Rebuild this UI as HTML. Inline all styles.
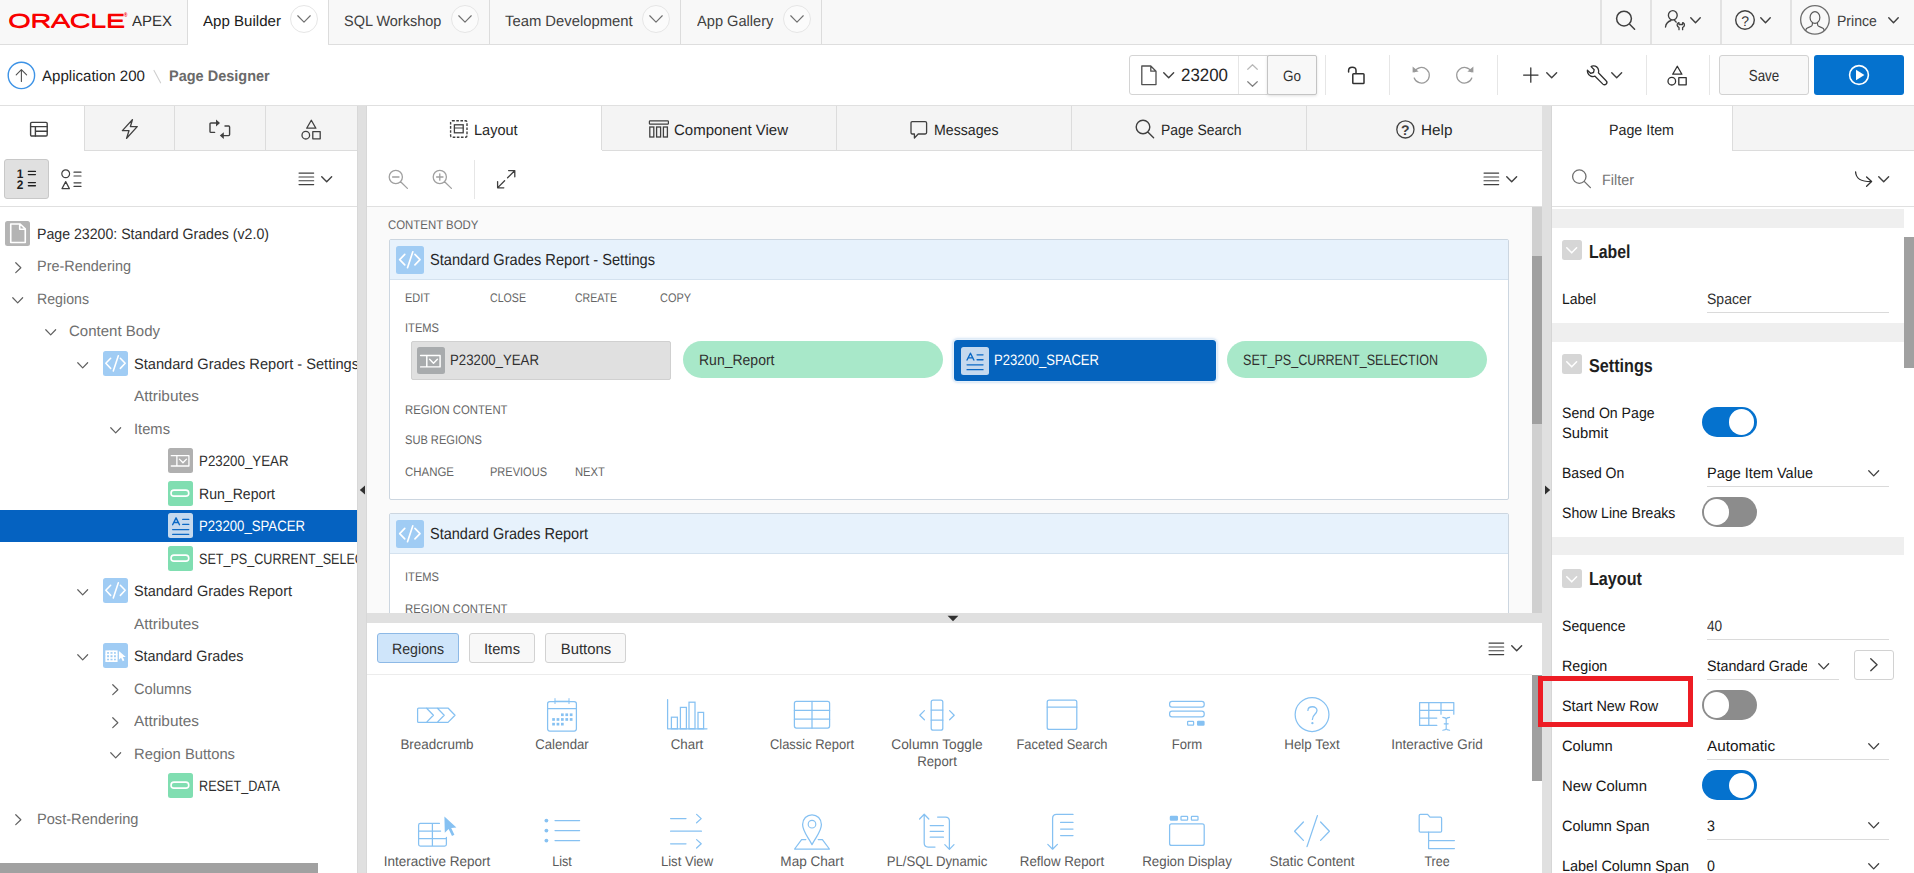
<!DOCTYPE html>
<html lang="en"><head><meta charset="utf-8"><title>Page Designer</title><style>
html,body{margin:0;padding:0;}
body{width:1914px;height:873px;overflow:hidden;background:#fff;font-family:"Liberation Sans",sans-serif;position:relative;}
.a{position:absolute;display:block;}
.t{position:absolute;white-space:nowrap;display:block;text-rendering:geometricPrecision;}
svg{overflow:visible;}
</style></head>
<body>
<div class="a" style="left:0px;top:0px;width:1914px;height:44px;background:#f8f8f8;"></div>
<div class="a" style="left:0px;top:44px;width:1914px;height:1px;background:#dedede;"></div>
<div class="a" style="left:188px;top:0px;width:140px;height:45px;background:#ffffff;"></div>
<div class="a" style="left:328px;top:0px;width:1px;height:44px;background:#dcdcdc;"></div>
<div class="a" style="left:489px;top:0px;width:1px;height:44px;background:#dcdcdc;"></div>
<div class="a" style="left:680px;top:0px;width:1px;height:44px;background:#dcdcdc;"></div>
<div class="a" style="left:821px;top:0px;width:1px;height:44px;background:#dcdcdc;"></div>
<div class="a" style="left:1600px;top:0px;width:2px;height:44px;background:#e2e2e2;"></div>
<div class="a" style="left:1650px;top:0px;width:2px;height:44px;background:#e2e2e2;"></div>
<div class="a" style="left:1720px;top:0px;width:2px;height:44px;background:#e2e2e2;"></div>
<div class="a" style="left:1790px;top:0px;width:2px;height:44px;background:#e2e2e2;"></div><span class="a" style="left:7.8px;top:8px;height:26px;line-height:26px;font-size:19.4px;color:#f80000;letter-spacing:-0.5px;white-space:nowrap;transform-origin:0 50%;transform:scaleX(1.52);text-rendering:geometricPrecision;text-shadow:0 1px 0 #f80000">ORACLE</span><span class="a" style="left:124px;top:13.4px;font-size:4.6px;line-height:6px;color:#f80000;font-weight:700">®</span>
<div class="a" style="left:187px;top:0px;width:1px;height:44px;background:#dcdcdc;"></div>
<span class="t" style="top:11px;line-height:21px;font-size:15px;color:#303030;left:132px;transform-origin:0 50%;transform:scaleX(0.9992);">APEX</span>
<span class="t" style="top:11px;line-height:21px;font-size:15px;color:#1a1a1a;left:202.5px;transform-origin:0 50%;transform:scaleX(1.0056);">App Builder</span>
<span class="t" style="top:11px;line-height:21px;font-size:15px;color:#404040;left:343.9px;transform-origin:0 50%;transform:scaleX(0.9644);">SQL Workshop</span>
<span class="t" style="top:11px;line-height:21px;font-size:15px;color:#404040;left:505.3px;transform-origin:0 50%;transform:scaleX(0.9881);">Team Development</span>
<span class="t" style="top:11px;line-height:21px;font-size:15px;color:#404040;left:696.9px;transform-origin:0 50%;transform:scaleX(0.9748);">App Gallery</span>
<div class="a" style="left:290px;top:5px;width:28px;height:28px;background:#ffffff;border:1px solid #e6e6e6;border-radius:14px;box-sizing:border-box;"></div>
<svg class="a" style="left:297px;top:15.1px;" width="14" height="7.9" viewBox="0 0 14 7.9"><path d="M0.75 0.75 L7.0 7.15 L13.25 0.75" fill="none" stroke="#707070" stroke-width="1.15" stroke-linecap="round" stroke-linejoin="round" /></svg>
<div class="a" style="left:450.8px;top:5px;width:28px;height:28px;background:#fbfbfb;border:1px solid #e6e6e6;border-radius:14px;box-sizing:border-box;"></div>
<svg class="a" style="left:457.8px;top:15.1px;" width="14" height="7.9" viewBox="0 0 14 7.9"><path d="M0.75 0.75 L7.0 7.15 L13.25 0.75" fill="none" stroke="#707070" stroke-width="1.15" stroke-linecap="round" stroke-linejoin="round" /></svg>
<div class="a" style="left:642.4px;top:5px;width:28px;height:28px;background:#fbfbfb;border:1px solid #e6e6e6;border-radius:14px;box-sizing:border-box;"></div>
<svg class="a" style="left:649.4px;top:15.1px;" width="14" height="7.9" viewBox="0 0 14 7.9"><path d="M0.75 0.75 L7.0 7.15 L13.25 0.75" fill="none" stroke="#707070" stroke-width="1.15" stroke-linecap="round" stroke-linejoin="round" /></svg>
<div class="a" style="left:782.9px;top:5px;width:28px;height:28px;background:#fbfbfb;border:1px solid #e6e6e6;border-radius:14px;box-sizing:border-box;"></div>
<svg class="a" style="left:789.9px;top:15.1px;" width="14" height="7.9" viewBox="0 0 14 7.9"><path d="M0.75 0.75 L7.0 7.15 L13.25 0.75" fill="none" stroke="#707070" stroke-width="1.15" stroke-linecap="round" stroke-linejoin="round" /></svg>
<svg class="a" style="left:1612px;top:8px;" width="26" height="26" viewBox="0 0 26 26"><path d="M19.4 10.6 A7.4 7.4 0 1 1 4.6 10.6 A7.4 7.4 0 1 1 19.4 10.6 Z M17.4 16 L22.6 21.2" fill="none" stroke="#404040" stroke-width="1.5" stroke-linecap="round" stroke-linejoin="round" /></svg>
<svg class="a" style="left:1662px;top:8px;" width="28" height="26" viewBox="0 0 28 26"><path d="M15.2 7.3 A4.4 4.7 0 1 1 6.4 7.3 A4.4 4.7 0 1 1 15.2 7.3 Z" fill="none" stroke="#404040" stroke-width="1.35" stroke-linecap="round" stroke-linejoin="round" /><path d="M9 12.5 C5.6 13.6 3.9 15.6 3.5 19" fill="none" stroke="#404040" stroke-width="1.35" stroke-linecap="round" stroke-linejoin="round" /><path d="M12.6 12.5 C13.2 12.9 13.8 13.5 14.2 14.1" fill="none" stroke="#404040" stroke-width="1.35" stroke-linecap="round" stroke-linejoin="round" /><path d="M16.3 14.7 C14.5 15.8 14.8 18.5 17 19.5 L17 21.7 M21.3 14.7 C23.1 15.8 22.8 18.5 20.6 19.5 L20.6 21.7 M17 14.7 L17 16.5 L20.6 16.5 L20.6 14.7" fill="none" stroke="#404040" stroke-width="1.3" stroke-linecap="round" stroke-linejoin="round" /></svg>
<svg class="a" style="left:1690px;top:17px;" width="11" height="6.5" viewBox="0 0 11 6.5"><path d="M0.75 0.75 L5.5 5.75 L10.25 0.75" fill="none" stroke="#404040" stroke-width="1.4" stroke-linecap="round" stroke-linejoin="round" /></svg>
<svg class="a" style="left:1734px;top:9px;" width="22" height="22" viewBox="0 0 22 22"><path d="M20.3 11 A9.3 9.3 0 1 1 1.7 11 A9.3 9.3 0 1 1 20.3 11 Z" fill="none" stroke="#404040" stroke-width="1.4" stroke-linecap="round" stroke-linejoin="round" /></svg>
<span class="t" style="top:11px;line-height:20px;font-size:14px;color:#303030;left:1745.2px;transform-origin:0 50%;transform:scaleX(1.0000) translateX(-50%);">?</span>
<svg class="a" style="left:1760px;top:17px;" width="11" height="6.5" viewBox="0 0 11 6.5"><path d="M0.75 0.75 L5.5 5.75 L10.25 0.75" fill="none" stroke="#404040" stroke-width="1.4" stroke-linecap="round" stroke-linejoin="round" /></svg>
<svg class="a" style="left:1799px;top:4px;" width="32" height="32" viewBox="0 0 32 32"><defs><clipPath id="avc"><circle cx="15.95" cy="15.85" r="14.3"/></clipPath></defs><circle cx="15.95" cy="15.85" r="14.3" fill="none" stroke="#6e6e6e" stroke-width="1.3"/><g clip-path="url(#avc)"><ellipse cx="15.95" cy="13.5" rx="4.9" ry="5.9" fill="none" stroke="#5a5a5a" stroke-width="1.2"/><path d="M13.5 18.8 L13.2 21.2 C13 22.8 8.6 23.2 7.4 24.7 C6.8 25.5 6.6 26.4 6.6 28.4 M18.4 18.8 L18.7 21.2 C18.9 22.8 23.3 23.2 24.5 24.7 C25.1 25.5 25.3 26.4 25.3 28.4" fill="none" stroke="#5a5a5a" stroke-width="1.2" stroke-linecap="round" stroke-linejoin="round" /></g></svg>
<span class="t" style="top:11px;line-height:21px;font-size:15px;color:#404040;left:1836.8px;transform-origin:0 50%;transform:scaleX(0.9358);">Prince</span>
<svg class="a" style="left:1888.4px;top:17px;" width="11.4" height="6.6" viewBox="0 0 11.4 6.6"><path d="M0.75 0.75 L5.5 5.75 L10.25 0.75" fill="none" stroke="#404040" stroke-width="1.4" stroke-linecap="round" stroke-linejoin="round" /></svg>
<div class="a" style="left:0px;top:45px;width:1914px;height:60px;background:#ffffff;"></div>
<div class="a" style="left:0px;top:105px;width:1914px;height:1px;background:#e0e0e0;"></div>
<svg class="a" style="left:7px;top:61px;" width="29" height="29" viewBox="0 0 29 29"><path d="M27.6 14.4 A13.2 13.2 0 1 1 1.2 14.4 A13.2 13.2 0 1 1 27.6 14.4 Z" fill="none" stroke="#3d93e6" stroke-width="1.4" stroke-linecap="round" stroke-linejoin="round" /><path d="M14.4 20.4 L14.4 8.8 M9.2 13.8 L14.4 8.6 L19.6 13.8" fill="none" stroke="#505050" stroke-width="1.1" stroke-linecap="round" stroke-linejoin="round" /></svg>
<span class="t" style="top:66px;line-height:21px;font-size:15.2px;color:#1f1f1f;left:41.7px;transform-origin:0 50%;transform:scaleX(0.9917);">Application 200</span>
<svg class="a" style="left:152px;top:65px;" width="10" height="22" viewBox="0 0 10 22"><path d="M2 5.4 L8.6 17.8" fill="none" stroke="#cfcfcf" stroke-width="1.1" stroke-linecap="round" stroke-linejoin="round" /></svg>
<span class="t" style="top:66px;line-height:21px;font-size:15.2px;color:#6a6a6a;font-weight:700;left:168.7px;transform-origin:0 50%;transform:scaleX(0.9544);">Page Designer</span>
<div class="a" style="left:1129px;top:55px;width:139px;height:40px;background:#fff;border:1px solid #d4d4d4;box-sizing:border-box;border-radius:3px 0 0 3px;"></div>
<div class="a" style="left:1238px;top:56px;width:1px;height:38px;background:#e6e6e6;"></div>
<svg class="a" style="left:1140px;top:64px;" width="18" height="22" viewBox="0 0 18 22"><path d="M1.8 2 L10.8 2 L16 7.2 L16 20.6 L1.8 20.6 Z M10.8 2 L10.8 7.2 L16 7.2" fill="none" stroke="#505050" stroke-width="1.3" stroke-linecap="round" stroke-linejoin="round" /></svg>
<svg class="a" style="left:1163.3px;top:72.2px;" width="11.4" height="6.6" viewBox="0 0 11.4 6.6"><path d="M0.75 0.75 L5.7 5.85 L10.65 0.75" fill="none" stroke="#404040" stroke-width="1.4" stroke-linecap="round" stroke-linejoin="round" /></svg>
<span class="t" style="top:63px;line-height:25px;font-size:18px;color:#262626;left:1180.7px;transform-origin:0 50%;transform:scaleX(0.9368);">23200</span>
<svg class="a" style="left:1247px;top:64px;" width="11" height="6" viewBox="0 0 11 6"><path d="M0.75 5.25 L5.5 0.75 L10.25 5.25" fill="none" stroke="#b8b8b8" stroke-width="1.2" stroke-linecap="round" stroke-linejoin="round" /></svg>
<svg class="a" style="left:1247px;top:80.5px;" width="11" height="6" viewBox="0 0 11 6"><path d="M0.75 0.75 L5.5 5.25 L10.25 0.75" fill="none" stroke="#808080" stroke-width="1.2" stroke-linecap="round" stroke-linejoin="round" /></svg>
<div class="a" style="left:1267px;top:55px;width:50px;height:40px;background:#f8f8f8;border:1px solid #c4c4c4;border-radius:2px;box-sizing:border-box;box-shadow:0 1px 3px rgba(0,0,0,.12);"></div>
<span class="t" style="top:66px;line-height:21px;font-size:15px;color:#303030;left:1292px;transform-origin:0 50%;transform:scaleX(0.8993) translateX(-50%);">Go</span>
<div class="a" style="left:1325px;top:55px;width:1px;height:40px;background:#e6e6e6;"></div>
<div class="a" style="left:1389px;top:55px;width:1px;height:40px;background:#e6e6e6;"></div>
<div class="a" style="left:1497px;top:55px;width:1px;height:40px;background:#e6e6e6;"></div>
<div class="a" style="left:1646px;top:55px;width:1px;height:40px;background:#e6e6e6;"></div>
<div class="a" style="left:1709px;top:55px;width:1px;height:40px;background:#e6e6e6;"></div>
<svg class="a" style="left:1345px;top:64px;" width="22" height="22" viewBox="0 0 22 22"><path d="M8.6 9.8 L18.2 9.8 Q19 9.8 19 10.6 L19 18.8 Q19 19.6 18.2 19.6 L8.6 19.6 Q7.8 19.6 7.8 18.8 L7.8 10.6 Q7.8 9.8 8.6 9.8 Z M11 9.8 L11 6.6 Q11 3.2 7.2 3.2 Q3.6 3.2 3.6 6.6 L3.6 8" fill="none" stroke="#303030" stroke-width="1.5" stroke-linecap="round" stroke-linejoin="round" /></svg>
<svg class="a" style="left:1410px;top:63.2px;" width="22" height="22" viewBox="0 0 22 22"><path d="M4.6 8.6 A7.8 7.8 0 1 1 4.2 15" fill="none" stroke="#9a9a9a" stroke-width="1.25" stroke-linecap="round" stroke-linejoin="round" /><path d="M2.6 3.6 L2.6 9.6 L8.6 8.6 Z" fill="#9a9a9a"/></svg>
<svg class="a" style="left:1454px;top:63.2px;" width="22" height="22" viewBox="0 0 22 22"><path d="M17.4 8.6 A7.8 7.8 0 1 0 17.8 15" fill="none" stroke="#9a9a9a" stroke-width="1.25" stroke-linecap="round" stroke-linejoin="round" /><path d="M19.4 3.6 L19.4 9.6 L13.4 8.6 Z" fill="#9a9a9a"/></svg>
<svg class="a" style="left:1522px;top:66px;" width="18" height="18" viewBox="0 0 18 18"><path d="M8.8 1.8 L8.8 16.2 M1.6 9 L16 9" fill="none" stroke="#303030" stroke-width="1.25" stroke-linecap="round" stroke-linejoin="round" /></svg>
<svg class="a" style="left:1546px;top:72.2px;" width="11.4" height="6.6" viewBox="0 0 11.4 6.6"><path d="M0.75 0.75 L5.7 5.85 L10.65 0.75" fill="none" stroke="#404040" stroke-width="1.4" stroke-linecap="round" stroke-linejoin="round" /></svg>
<svg class="a" style="left:1585px;top:64px;" width="24" height="24" viewBox="0 0 24 24"><path d="M8.2 1.9 C10.6 1.6 13.2 3.3 13.6 6.3 C13.75 7.3 13.65 8.1 13.4 8.8 L21.1 16.7 A2.3 2.3 0 0 1 17.9 20.1 L10 12.2 C7.4 13.2 3.7 12 2.7 8.7 C2.4 7.8 2.3 7 2.4 6.2 L5.6 9.3 L8.5 8.5 L9.2 5.7 L6.1 2.6 C6.8 2.2 7.5 2 8.2 1.9 Z" fill="none" stroke="#303030" stroke-width="1.3" stroke-linecap="round" stroke-linejoin="round" /></svg>
<svg class="a" style="left:1611px;top:72.2px;" width="11.4" height="6.6" viewBox="0 0 11.4 6.6"><path d="M0.75 0.75 L5.7 5.85 L10.65 0.75" fill="none" stroke="#404040" stroke-width="1.4" stroke-linecap="round" stroke-linejoin="round" /></svg>
<svg class="a" style="left:1666px;top:64px;" width="22" height="22" viewBox="0 0 22 22"><path d="M11.3 2.2 L15.9 10.2 L6.7 10.2 Z" fill="none" stroke="#303030" stroke-width="1.3" stroke-linecap="round" stroke-linejoin="round" /><path d="M9.6 17.2 A3.8 3.8 0 1 1 2 17.2 A3.8 3.8 0 1 1 9.6 17.2 Z" fill="none" stroke="#303030" stroke-width="1.3" stroke-linecap="round" stroke-linejoin="round" /><path d="M12.8 13.6 L20.2 13.6 L20.2 20.8 L12.8 20.8 Z" fill="none" stroke="#303030" stroke-width="1.3" stroke-linecap="round" stroke-linejoin="round" /></svg>
<div class="a" style="left:1719px;top:55px;width:90px;height:40px;background:#f8f8f8;border:1px solid #d2d2d2;border-radius:3px;box-sizing:border-box;"></div>
<span class="t" style="top:66px;line-height:22px;font-size:16px;color:#303030;left:1764px;transform-origin:0 50%;transform:scaleX(0.8363) translateX(-50%);">Save</span>
<div class="a" style="left:1814px;top:55px;width:90px;height:40px;background:#0572ce;border-radius:3px;"></div>
<svg class="a" style="left:1848px;top:64px;" width="22" height="22" viewBox="0 0 22 22"><path d="M20.4 11 A9.4 9.4 0 1 1 1.6 11 A9.4 9.4 0 1 1 20.4 11 Z" fill="none" stroke="#fff" stroke-width="1.6" stroke-linecap="round" stroke-linejoin="round" /><path d="M8 5.8 L16.4 11 L8 16.2 Z" fill="#fff"/></svg>
<div class="a" style="left:0;top:0;width:357px;height:873px;overflow:hidden">
<div class="a" style="left:0px;top:106px;width:357px;height:44px;background:#f4f4f4;"></div>
<div class="a" style="left:0px;top:150px;width:357px;height:1px;background:#dcdcdc;"></div>
<div class="a" style="left:0px;top:106px;width:84px;height:45px;background:#fff;"></div>
<div class="a" style="left:84px;top:106px;width:1px;height:44px;background:#dcdcdc;"></div>
<div class="a" style="left:174px;top:106px;width:1px;height:44px;background:#dcdcdc;"></div>
<div class="a" style="left:265px;top:106px;width:1px;height:44px;background:#dcdcdc;"></div>
<svg class="a" style="left:29px;top:120px;" width="20" height="18" viewBox="0 0 20 18"><rect x="1.6" y="2.4" width="16.6" height="13.6" rx="1.2" fill="none" stroke="#404040" stroke-width="1.4"/><path d="M1.6 6.6 L18.2 6.6 M6.4 6.6 L6.4 16 M6.4 11.2 L18.2 11.2" fill="none" stroke="#404040" stroke-width="1.4" stroke-linecap="round" stroke-linejoin="round" /></svg>
<svg class="a" style="left:119px;top:117px;" width="22" height="24" viewBox="0 0 22 24"><path d="M13.4 2.6 L3.4 13.6 L10 13.6 L7.6 21.4 L18.2 9.6 L11.4 9.6 Z" fill="none" stroke="#404040" stroke-width="1.4" stroke-linecap="round" stroke-linejoin="round" /></svg>
<svg class="a" style="left:208px;top:118px;" width="24" height="22" viewBox="0 0 24 22"><path d="M8.6 5 L3 5 Q2 5 2 6 L2 13.4 Q2 14.4 3 14.4 L6.6 14.4" fill="none" stroke="#404040" stroke-width="1.4" stroke-linecap="round" stroke-linejoin="round" /><path d="M8 1.6 L12 5 L8 8.4 Z" fill="#404040"/><path d="M15 17.6 L20.6 17.6 Q21.6 17.6 21.6 16.6 L21.6 9 Q21.6 8 20.6 8 L17 8" fill="none" stroke="#404040" stroke-width="1.4" stroke-linecap="round" stroke-linejoin="round" /><path d="M15.8 14.2 L11.8 17.6 L15.8 21 Z" fill="#404040"/></svg>
<svg class="a" style="left:299.6px;top:117.6px;" width="22" height="22" viewBox="0 0 22 22"><path d="M11.3 2.2 L15.9 10.2 L6.7 10.2 Z" fill="none" stroke="#404040" stroke-width="1.3" stroke-linecap="round" stroke-linejoin="round" /><path d="M9.6 17.2 A3.8 3.8 0 1 1 2 17.2 A3.8 3.8 0 1 1 9.6 17.2 Z" fill="none" stroke="#404040" stroke-width="1.3" stroke-linecap="round" stroke-linejoin="round" /><path d="M12.8 13.6 L20.2 13.6 L20.2 20.8 L12.8 20.8 Z" fill="none" stroke="#404040" stroke-width="1.3" stroke-linecap="round" stroke-linejoin="round" /></svg>
<div class="a" style="left:0px;top:151px;width:357px;height:55px;background:#fff;"></div>
<div class="a" style="left:0px;top:206px;width:357px;height:1px;background:#e0e0e0;"></div>
<div class="a" style="left:4px;top:159px;width:45px;height:40px;background:#e0e0e0;border:1px solid #c8c8c8;border-radius:3px;box-sizing:border-box;"></div>
<span class="t" style="top:165px;line-height:18px;font-size:12.5px;color:#202020;font-weight:700;left:20.2px;transform-origin:0 50%;transform:scaleX(0.9500) translateX(-50%);">1</span>
<span class="t" style="top:176px;line-height:18px;font-size:12.5px;color:#202020;font-weight:700;left:20.2px;transform-origin:0 50%;transform:scaleX(0.9500) translateX(-50%);">2</span>
<svg class="a" style="left:27px;top:167px;" width="10" height="24" viewBox="0 0 10 24"><path d="M1.4 4.4 L8.4 4.4 M1.4 7.6 L8.4 7.6 M1.4 15.6 L8.4 15.6 M1.4 18.8 L8.4 18.8" fill="none" stroke="#202020" stroke-width="1.4" stroke-linecap="round" stroke-linejoin="round" stroke-linecap="butt"/></svg>
<svg class="a" style="left:60px;top:168px;" width="23" height="24" viewBox="0 0 23 24"><path d="M9.6 5.8 A3.9 3.9 0 1 1 1.8 5.8 A3.9 3.9 0 1 1 9.6 5.8 Z" fill="none" stroke="#404040" stroke-width="1.2" stroke-linecap="round" stroke-linejoin="round" /><path d="M5.7 13.6 L9.4 20.6 L2 20.6 Z" fill="none" stroke="#404040" stroke-width="1.2" stroke-linecap="round" stroke-linejoin="round" /><path d="M14 4.2 L21 4.2 M14 8 L21 8 M14 14.8 L21 14.8 M14 18.4 L21 18.4" fill="none" stroke="#404040" stroke-width="1.2" stroke-linecap="round" stroke-linejoin="round" /></svg>
<svg class="a" style="left:299px;top:172px;" width="15" height="14" viewBox="0 0 15 14"><path d="M0 1.1 L14.7 1.1 M0 5 L14.7 5 M0 8.8 L14.7 8.8 M0 12.6 L14.7 12.6" fill="none" stroke="#404040" stroke-width="1.1" stroke-linecap="round" stroke-linejoin="round" stroke-linecap="butt"/></svg>
<svg class="a" style="left:320.7px;top:176px;" width="11.4" height="6.6" viewBox="0 0 11.4 6.6"><path d="M0.75 0.75 L5.7 5.85 L10.65 0.75" fill="none" stroke="#404040" stroke-width="1.4" stroke-linecap="round" stroke-linejoin="round" /></svg>
<div class="a" style="left:0px;top:207px;width:357px;height:666px;background:#fff;"></div>
<div class="a" style="left:5.2px;top:221px;width:25px;height:25px;background:#b4b4b4;border-radius:2.5px;"></div>
<svg class="a" style="left:5.2px;top:221px;" width="25" height="25" viewBox="0 0 25 25"><g transform="translate(0.00 0.00)"><path d="M5.745967741935484 3.024193548387097 L15.120967741935484 3.024193548387097 L20.262096774193548 7.862903225806451 L20.262096774193548 21.471774193548388 L5.745967741935484 21.471774193548388 Z M14.71774193548387 3.024193548387097 L14.71774193548387 8.266129032258064 L20.262096774193548 8.266129032258064" fill="none" stroke="#fff" stroke-width="1.6129032258064517" stroke-linecap="round" stroke-linejoin="round" stroke-linejoin="miter"/></g></svg>
<span class="t" style="top:224px;line-height:21px;font-size:15px;color:#2e2e2e;left:37.1px;transform-origin:0 50%;transform:scaleX(0.9431);">Page 23200: Standard Grades (v2.0)</span>
<svg class="a" style="left:14.65px;top:261.8px;" width="6.6" height="11.4" viewBox="0 0 6.6 11.4"><path d="M0.75 0.75 L5.85 5.7 L0.75 10.65" fill="none" stroke="#606060" stroke-width="1.2" stroke-linecap="round" stroke-linejoin="round" /></svg>
<span class="t" style="top:256px;line-height:21px;font-size:15px;color:#707070;left:37.1px;transform-origin:0 50%;transform:scaleX(0.9635);">Pre-Rendering</span>
<svg class="a" style="left:12.05px;top:296.6px;" width="11.4" height="6.6" viewBox="0 0 11.4 6.6"><path d="M0.75 0.75 L5.7 5.85 L10.65 0.75" fill="none" stroke="#606060" stroke-width="1.2" stroke-linecap="round" stroke-linejoin="round" /></svg>
<span class="t" style="top:289px;line-height:21px;font-size:15px;color:#707070;left:37.1px;transform-origin:0 50%;transform:scaleX(0.9446);">Regions</span>
<svg class="a" style="left:44.55px;top:329.1px;" width="11.4" height="6.6" viewBox="0 0 11.4 6.6"><path d="M0.75 0.75 L5.7 5.85 L10.65 0.75" fill="none" stroke="#606060" stroke-width="1.2" stroke-linecap="round" stroke-linejoin="round" /></svg>
<span class="t" style="top:321px;line-height:21px;font-size:15px;color:#707070;left:69.4px;transform-origin:0 50%;transform:scaleX(1.0010);">Content Body</span>
<svg class="a" style="left:77.05px;top:361.6px;" width="11.4" height="6.6" viewBox="0 0 11.4 6.6"><path d="M0.75 0.75 L5.7 5.85 L10.65 0.75" fill="none" stroke="#606060" stroke-width="1.2" stroke-linecap="round" stroke-linejoin="round" /></svg>
<div class="a" style="left:103px;top:351px;width:25px;height:25px;background:#a0ccf4;border-radius:2.5px;"></div>
<svg class="a" style="left:103px;top:351px;" width="25" height="25" viewBox="0 0 25 25"><g transform="translate(0.00 0.00)"><path d="M7.661290322580645 7.258064516129032 L2.82258064516129 12.298387096774192 L7.661290322580645 17.338709677419352" fill="none" stroke="#fff" stroke-width="1.5625" stroke-linecap="round" stroke-linejoin="round" /><path d="M17.338709677419352 7.258064516129032 L22.177419354838708 12.298387096774192 L17.338709677419352 17.338709677419352" fill="none" stroke="#fff" stroke-width="1.5625" stroke-linecap="round" stroke-linejoin="round" /><path d="M15.32258064516129 4.838709677419355 L10.282258064516128 19.95967741935484" fill="none" stroke="#fff" stroke-width="1.5625" stroke-linecap="round" stroke-linejoin="round" /></g></svg>
<span class="t" style="top:354px;line-height:21px;font-size:15px;color:#2e2e2e;left:134.1px;transform-origin:0 50%;transform:scaleX(0.9743);">Standard Grades Report - Settings</span>
<span class="t" style="top:386px;line-height:21px;font-size:15px;color:#707070;left:134.1px;transform-origin:0 50%;transform:scaleX(1.0256);">Attributes</span>
<svg class="a" style="left:109.55px;top:426.6px;" width="11.4" height="6.6" viewBox="0 0 11.4 6.6"><path d="M0.75 0.75 L5.7 5.85 L10.65 0.75" fill="none" stroke="#606060" stroke-width="1.2" stroke-linecap="round" stroke-linejoin="round" /></svg>
<span class="t" style="top:419px;line-height:21px;font-size:15px;color:#707070;left:134.1px;transform-origin:0 50%;transform:scaleX(0.9813);">Items</span>
<div class="a" style="left:168.2px;top:448px;width:25px;height:25px;background:#b0b0b0;border-radius:2.5px;"></div>
<svg class="a" style="left:168.2px;top:448px;" width="25" height="25" viewBox="0 0 25 25"><g transform="translate(0.00 0.00)"><path d="M3.260869565217391 7.69927536231884 L20.92391304347826 7.69927536231884 L20.92391304347826 18.02536231884058 L3.260869565217391 18.02536231884058 M8.876811594202898 7.69927536231884 L8.876811594202898 18.02536231884058" fill="none" stroke="#fff" stroke-width="1.313405797101449" stroke-linecap="round" stroke-linejoin="round" stroke-linecap="butt" stroke-linejoin="miter"/><path d="M11.413043478260867 11.141304347826086 L14.945652173913041 14.764492753623188 L18.478260869565215 11.141304347826086" fill="none" stroke="#fff" stroke-width="1.313405797101449" stroke-linecap="round" stroke-linejoin="round" /></g></svg>
<span class="t" style="top:451px;line-height:21px;font-size:15px;color:#2e2e2e;left:199.3px;transform-origin:0 50%;transform:scaleX(0.8880);">P23200_YEAR</span>
<div class="a" style="left:168.2px;top:481px;width:25px;height:25px;background:#80deb1;border-radius:2.5px;"></div>
<svg class="a" style="left:168.2px;top:481px;" width="25" height="25" viewBox="0 0 25 25"><g transform="translate(0.00 0.00)"><rect x="3.024193548387097" y="9.173387096774194" width="17.741935483870968" height="5.947580645161291" rx="2.9737903225806455" fill="none" stroke="#fff" stroke-width="1.6129032258064517"/></g></svg>
<span class="t" style="top:484px;line-height:21px;font-size:15px;color:#2e2e2e;left:199.3px;transform-origin:0 50%;transform:scaleX(0.9395);">Run_Report</span>
<div class="a" style="left:0px;top:510px;width:357px;height:32px;background:#0562c1;"></div>
<div class="a" style="left:168.2px;top:513px;width:25px;height:25px;background:#c5d9ee;border-radius:2.5px;"></div>
<svg class="a" style="left:168.2px;top:513px;" width="25" height="25" viewBox="0 0 25 25"><g transform="translate(0.00 0.00)"><path d="M4.637096774193548 11.693548387096774 L8.064516129032258 4.838709677419355 L11.491935483870968 11.693548387096774 M5.846774193548387 9.475806451612904 L10.282258064516128 9.475806451612904" fill="none" stroke="#0b69c5" stroke-width="1.411290322580645" stroke-linecap="round" stroke-linejoin="round" /><path d="M14.71774193548387 6.451612903225807 L20.766129032258064 6.451612903225807 M14.71774193548387 11.391129032258066 L20.766129032258064 11.391129032258066 M4.637096774193548 16.532258064516128 L20.766129032258064 16.532258064516128 M4.637096774193548 21.370967741935484 L20.766129032258064 21.370967741935484" fill="none" stroke="#0b69c5" stroke-width="1.310483870967742" stroke-linecap="round" stroke-linejoin="round" /></g></svg>
<span class="t" style="top:516px;line-height:21px;font-size:15px;color:#fff;left:199.3px;transform-origin:0 50%;transform:scaleX(0.8786);">P23200_SPACER</span>
<div class="a" style="left:168.2px;top:546px;width:25px;height:25px;background:#80deb1;border-radius:2.5px;"></div>
<svg class="a" style="left:168.2px;top:546px;" width="25" height="25" viewBox="0 0 25 25"><g transform="translate(0.00 0.00)"><rect x="3.024193548387097" y="9.173387096774194" width="17.741935483870968" height="5.947580645161291" rx="2.9737903225806455" fill="none" stroke="#fff" stroke-width="1.6129032258064517"/></g></svg>
<span class="t" style="top:549px;line-height:21px;font-size:15px;color:#2e2e2e;left:199.3px;transform-origin:0 50%;transform:scaleX(0.8385);">SET_PS_CURRENT_SELECTION</span>
<svg class="a" style="left:77.05px;top:589.1px;" width="11.4" height="6.6" viewBox="0 0 11.4 6.6"><path d="M0.75 0.75 L5.7 5.85 L10.65 0.75" fill="none" stroke="#606060" stroke-width="1.2" stroke-linecap="round" stroke-linejoin="round" /></svg>
<div class="a" style="left:103px;top:578px;width:25px;height:25px;background:#a0ccf4;border-radius:2.5px;"></div>
<svg class="a" style="left:103px;top:578px;" width="25" height="25" viewBox="0 0 25 25"><g transform="translate(0.00 0.00)"><path d="M7.661290322580645 7.258064516129032 L2.82258064516129 12.298387096774192 L7.661290322580645 17.338709677419352" fill="none" stroke="#fff" stroke-width="1.5625" stroke-linecap="round" stroke-linejoin="round" /><path d="M17.338709677419352 7.258064516129032 L22.177419354838708 12.298387096774192 L17.338709677419352 17.338709677419352" fill="none" stroke="#fff" stroke-width="1.5625" stroke-linecap="round" stroke-linejoin="round" /><path d="M15.32258064516129 4.838709677419355 L10.282258064516128 19.95967741935484" fill="none" stroke="#fff" stroke-width="1.5625" stroke-linecap="round" stroke-linejoin="round" /></g></svg>
<span class="t" style="top:581px;line-height:21px;font-size:15px;color:#2e2e2e;left:134.1px;transform-origin:0 50%;transform:scaleX(0.9667);">Standard Grades Report</span>
<span class="t" style="top:614px;line-height:21px;font-size:15px;color:#707070;left:134.1px;transform-origin:0 50%;transform:scaleX(1.0256);">Attributes</span>
<svg class="a" style="left:77.05px;top:654.1px;" width="11.4" height="6.6" viewBox="0 0 11.4 6.6"><path d="M0.75 0.75 L5.7 5.85 L10.65 0.75" fill="none" stroke="#606060" stroke-width="1.2" stroke-linecap="round" stroke-linejoin="round" /></svg>
<div class="a" style="left:103px;top:643px;width:25px;height:25px;background:#a0ccf4;border-radius:2.5px;"></div>
<svg class="a" style="left:103px;top:643px;" width="25" height="25" viewBox="0 0 25 25"><g transform="translate(0.00 0.00)"><rect x="3.2258064516129035" y="8.266129032258064" width="10.483870967741936" height="9.879032258064516" fill="none" stroke="#fff" stroke-width="1.7137096774193548"/><path d="M3.2258064516129035 11.59274193548387 L13.709677419354838 11.59274193548387 M3.2258064516129035 14.919354838709678 L13.709677419354838 14.919354838709678 M6.754032258064516 8.266129032258064 L6.754032258064516 18.14516129032258 M10.282258064516128 8.266129032258064 L10.282258064516128 18.14516129032258" fill="none" stroke="#fff" stroke-width="1.5120967741935485" stroke-linecap="round" stroke-linejoin="round" /><path d="M15.92741935483871 8.064516129032258 L15.92741935483871 16.733870967741936 L18.044354838709676 14.818548387096774 L19.758064516129032 18.14516129032258 L21.370967741935484 17.338709677419352 L19.758064516129032 14.112903225806452 L22.78225806451613 13.911290322580646 Z" fill="#fff"/></g></svg>
<span class="t" style="top:646px;line-height:21px;font-size:15px;color:#2e2e2e;left:134.1px;transform-origin:0 50%;transform:scaleX(0.9584);">Standard Grades</span>
<svg class="a" style="left:112.15px;top:684.3px;" width="6.6" height="11.4" viewBox="0 0 6.6 11.4"><path d="M0.75 0.75 L5.85 5.7 L0.75 10.65" fill="none" stroke="#606060" stroke-width="1.2" stroke-linecap="round" stroke-linejoin="round" /></svg>
<span class="t" style="top:679px;line-height:21px;font-size:15px;color:#707070;left:134.1px;transform-origin:0 50%;transform:scaleX(0.9732);">Columns</span>
<svg class="a" style="left:112.15px;top:716.8px;" width="6.6" height="11.4" viewBox="0 0 6.6 11.4"><path d="M0.75 0.75 L5.85 5.7 L0.75 10.65" fill="none" stroke="#606060" stroke-width="1.2" stroke-linecap="round" stroke-linejoin="round" /></svg>
<span class="t" style="top:711px;line-height:21px;font-size:15px;color:#707070;left:134.1px;transform-origin:0 50%;transform:scaleX(1.0256);">Attributes</span>
<svg class="a" style="left:109.55px;top:751.6px;" width="11.4" height="6.6" viewBox="0 0 11.4 6.6"><path d="M0.75 0.75 L5.7 5.85 L10.65 0.75" fill="none" stroke="#606060" stroke-width="1.2" stroke-linecap="round" stroke-linejoin="round" /></svg>
<span class="t" style="top:744px;line-height:21px;font-size:15px;color:#707070;left:134.1px;transform-origin:0 50%;transform:scaleX(0.9846);">Region Buttons</span>
<div class="a" style="left:168.2px;top:773px;width:25px;height:25px;background:#80deb1;border-radius:2.5px;"></div>
<svg class="a" style="left:168.2px;top:773px;" width="25" height="25" viewBox="0 0 25 25"><g transform="translate(0.00 0.00)"><rect x="3.024193548387097" y="9.173387096774194" width="17.741935483870968" height="5.947580645161291" rx="2.9737903225806455" fill="none" stroke="#fff" stroke-width="1.6129032258064517"/></g></svg>
<span class="t" style="top:776px;line-height:21px;font-size:15px;color:#2e2e2e;left:199.3px;transform-origin:0 50%;transform:scaleX(0.8425);">RESET_DATA</span>
<svg class="a" style="left:14.65px;top:814.3px;" width="6.6" height="11.4" viewBox="0 0 6.6 11.4"><path d="M0.75 0.75 L5.85 5.7 L0.75 10.65" fill="none" stroke="#606060" stroke-width="1.2" stroke-linecap="round" stroke-linejoin="round" /></svg>
<span class="t" style="top:809px;line-height:21px;font-size:15px;color:#707070;left:37.1px;transform-origin:0 50%;transform:scaleX(0.9738);">Post-Rendering</span>
<div class="a" style="left:0px;top:863px;width:357px;height:10px;background:#ffffff;"></div>
<div class="a" style="left:0px;top:863px;width:317.5px;height:10px;background:#a1a1a1;"></div></div>
<div class="a" style="left:357px;top:106px;width:10px;height:767px;background:#e0e0e0;"></div>
<div class="a" style="left:357px;top:106px;width:1px;height:767px;background:#d8d8d8;"></div>
<div class="a" style="left:366px;top:106px;width:1px;height:767px;background:#d8d8d8;"></div>
<div class="a" style="left:1542px;top:106px;width:10px;height:767px;background:#e0e0e0;"></div>
<div class="a" style="left:1551px;top:106px;width:1px;height:767px;background:#d6d6d6;"></div>
<svg class="a" style="left:359px;top:485px" width="7" height="10" viewBox="0 0 7 10"><path d="M6 0.5 L0.8 5 L6 9.5 Z" fill="#303030"/></svg>
<svg class="a" style="left:1543.5px;top:485px" width="7" height="10" viewBox="0 0 7 10"><path d="M1 0.5 L6.2 5 L1 9.5 Z" fill="#303030"/></svg>
<div class="a" style="left:367px;top:106px;width:1175px;height:44px;background:#f4f4f4;"></div>
<div class="a" style="left:367px;top:150px;width:1175px;height:1px;background:#dcdcdc;"></div>
<div class="a" style="left:367px;top:106px;width:234.5px;height:45px;background:#fff;"></div>
<div class="a" style="left:601px;top:106px;width:1px;height:44px;background:#dcdcdc;"></div>
<div class="a" style="left:836px;top:106px;width:1px;height:44px;background:#dcdcdc;"></div>
<div class="a" style="left:1071px;top:106px;width:1px;height:44px;background:#dcdcdc;"></div>
<div class="a" style="left:1306px;top:106px;width:1px;height:44px;background:#dcdcdc;"></div>
<svg class="a" style="left:449px;top:119px;" width="20" height="20" viewBox="0 0 20 20"><rect x="1.6" y="1.8" width="16.4" height="16.4" rx="1.6" fill="none" stroke="#404040" stroke-width="1.4" stroke-dasharray="2.6 1.5"/><rect x="5.4" y="5.8" width="8.8" height="8" fill="none" stroke="#404040" stroke-width="1.3"/><path d="M5.4 9 L14.2 9" fill="none" stroke="#404040" stroke-width="1.2" stroke-linecap="round" stroke-linejoin="round" /></svg>
<span class="t" style="top:120px;line-height:21px;font-size:15px;color:#262626;left:474px;transform-origin:0 50%;transform:scaleX(0.9679);">Layout</span>
<svg class="a" style="left:648px;top:119px;" width="22" height="20" viewBox="0 0 22 20"><rect x="1.4" y="1.8" width="19" height="3.4" rx="0.8" fill="none" stroke="#404040" stroke-width="1.2"/><rect x="1.8" y="8" width="4" height="10" fill="none" stroke="#404040" stroke-width="1.3"/><rect x="8.6" y="8" width="4" height="10" fill="none" stroke="#404040" stroke-width="1.3"/><rect x="15.4" y="8" width="4" height="10" fill="none" stroke="#404040" stroke-width="1.3"/></svg>
<span class="t" style="top:120px;line-height:21px;font-size:15px;color:#262626;left:674px;transform-origin:0 50%;transform:scaleX(1.0003);">Component View</span>
<svg class="a" style="left:909px;top:119px;" width="20" height="20" viewBox="0 0 20 20"><path d="M3.2 2.6 L16.2 2.6 Q17.6 2.6 17.6 4 L17.6 13.6 Q17.6 15 16.2 15 L9.2 15 L5.4 19 L5.4 15 L3.2 15 Q2 15 2 13.6 L2 4 Q2 2.6 3.2 2.6 Z" fill="none" stroke="#404040" stroke-width="1.3" stroke-linecap="round" stroke-linejoin="round" /></svg>
<span class="t" style="top:120px;line-height:21px;font-size:15px;color:#262626;left:933.5px;transform-origin:0 50%;transform:scaleX(0.9433);">Messages</span>
<svg class="a" style="left:1134px;top:118px;" width="22" height="22" viewBox="0 0 22 22"><path d="M15.8 9 A6.8 6.8 0 1 1 2.2 9 A6.8 6.8 0 1 1 15.8 9 Z M13.8 14 L19.6 19.8" fill="none" stroke="#404040" stroke-width="1.4" stroke-linecap="round" stroke-linejoin="round" /></svg>
<span class="t" style="top:120px;line-height:21px;font-size:15px;color:#262626;left:1160.5px;transform-origin:0 50%;transform:scaleX(0.9281);">Page Search</span>
<svg class="a" style="left:1395px;top:119px;" width="21" height="21" viewBox="0 0 21 21"><path d="M19 10.4 A8.6 8.6 0 1 1 1.8 10.4 A8.6 8.6 0 1 1 19 10.4 Z" fill="none" stroke="#404040" stroke-width="1.3" stroke-linecap="round" stroke-linejoin="round" /></svg>
<span class="t" style="top:120px;line-height:20px;font-size:14px;color:#404040;font-weight:700;left:1405.4px;transform-origin:0 50%;transform:scaleX(1.0000) translateX(-50%);">?</span>
<span class="t" style="top:120px;line-height:21px;font-size:15px;color:#262626;left:1420.5px;transform-origin:0 50%;transform:scaleX(1.0208);">Help</span>
<div class="a" style="left:367px;top:151px;width:1175px;height:55px;background:#fff;"></div>
<div class="a" style="left:367px;top:206px;width:1175px;height:1px;background:#e0e0e0;"></div>
<svg class="a" style="left:388px;top:169px;" width="22" height="22" viewBox="0 0 22 22"><path d="M14.4 8 A6.6 6.6 0 1 1 1.2 8 A6.6 6.6 0 1 1 14.4 8 Z M12.6 12.8 L19.4 19.4 M4.6 8 L11 8" fill="none" stroke="#a0a0a0" stroke-width="1.3" stroke-linecap="round" stroke-linejoin="round" /></svg>
<svg class="a" style="left:432px;top:169px;" width="22" height="22" viewBox="0 0 22 22"><path d="M14.4 8 A6.6 6.6 0 1 1 1.2 8 A6.6 6.6 0 1 1 14.4 8 Z M12.6 12.8 L19.4 19.4 M4.6 8 L11 8 M7.8 4.8 L7.8 11.2" fill="none" stroke="#a0a0a0" stroke-width="1.3" stroke-linecap="round" stroke-linejoin="round" /></svg>
<div class="a" style="left:474px;top:160px;width:1px;height:39px;background:#e6e6e6;"></div>
<svg class="a" style="left:496px;top:169px;" width="21" height="21" viewBox="0 0 21 21"><path d="M11.6 8.8 L18.6 1.8 M12.6 1.6 L18.8 1.6 L18.8 7.8 M8.6 11.8 L1.8 18.6 M1.6 12.6 L1.6 18.8 L7.8 18.8" fill="none" stroke="#404040" stroke-width="1.3" stroke-linecap="round" stroke-linejoin="round" /></svg>
<svg class="a" style="left:1484.2px;top:172.4px;" width="15" height="14" viewBox="0 0 15 14"><path d="M0 1.1 L14.7 1.1 M0 5 L14.7 5 M0 8.8 L14.7 8.8 M0 12.6 L14.7 12.6" fill="none" stroke="#404040" stroke-width="1.1" stroke-linecap="round" stroke-linejoin="round" stroke-linecap="butt"/></svg>
<svg class="a" style="left:1506px;top:176px;" width="11.4" height="6.6" viewBox="0 0 11.4 6.6"><path d="M0.75 0.75 L5.7 5.85 L10.65 0.75" fill="none" stroke="#404040" stroke-width="1.4" stroke-linecap="round" stroke-linejoin="round" /></svg>
<div class="a" style="left:367px;top:207px;width:1165px;height:406px;background:#fafafa;"></div>
<span class="t" style="top:216px;line-height:18px;font-size:12.5px;color:#666666;left:388px;transform-origin:0 50%;transform:scaleX(0.9123);">CONTENT BODY</span>
<div class="a" style="left:389px;top:239px;width:1120px;height:260.5px;background:#fff;border:1px solid #ccd6e0;border-radius:2px;box-sizing:border-box;"></div>
<div class="a" style="left:390px;top:240px;width:1118px;height:39px;background:#e7f2fc;"></div>
<div class="a" style="left:390px;top:279px;width:1118px;height:1px;background:#d4e2ef;"></div>
<div class="a" style="left:396.2px;top:246px;width:27.7px;height:27.7px;background:#a0ccf4;border-radius:2.5px;"></div>
<svg class="a" style="left:396.2px;top:246px;" width="27.7" height="27.7" viewBox="0 0 27.7 27.7"><g transform="translate(0.71 0.71)"><path d="M8.056 7.632000000000001 L2.968 12.932 L8.056 18.232" fill="none" stroke="#fff" stroke-width="1.6430000000000002" stroke-linecap="round" stroke-linejoin="round" /><path d="M18.232 7.632000000000001 L23.32 12.932 L18.232 18.232" fill="none" stroke="#fff" stroke-width="1.6430000000000002" stroke-linecap="round" stroke-linejoin="round" /><path d="M16.112 5.088 L10.812 20.988000000000003" fill="none" stroke="#fff" stroke-width="1.6430000000000002" stroke-linecap="round" stroke-linejoin="round" /></g></svg>
<span class="t" style="top:250px;line-height:22px;font-size:16px;color:#262626;left:430.3px;transform-origin:0 50%;transform:scaleX(0.9133);">Standard Grades Report - Settings</span>
<span class="t" style="top:289px;line-height:18px;font-size:12.5px;color:#666666;left:405.3px;transform-origin:0 50%;transform:scaleX(0.8777);">EDIT</span>
<span class="t" style="top:289px;line-height:18px;font-size:12.5px;color:#666666;left:490.3px;transform-origin:0 50%;transform:scaleX(0.8492);">CLOSE</span>
<span class="t" style="top:289px;line-height:18px;font-size:12.5px;color:#666666;left:575.3px;transform-origin:0 50%;transform:scaleX(0.8437);">CREATE</span>
<span class="t" style="top:289px;line-height:18px;font-size:12.5px;color:#666666;left:660.3px;transform-origin:0 50%;transform:scaleX(0.8748);">COPY</span>
<span class="t" style="top:319px;line-height:18px;font-size:12.5px;color:#666666;left:405.3px;transform-origin:0 50%;transform:scaleX(0.8900);">ITEMS</span>
<div class="a" style="left:411px;top:341px;width:260px;height:39px;background:#e0e0e0;border:1px solid #d0d0d0;border-radius:2px;box-sizing:border-box;"></div>
<div class="a" style="left:417.2px;top:347px;width:27.6px;height:27px;background:#a8abad;border-radius:2.5px;"></div>
<svg class="a" style="left:417.2px;top:347px;" width="27.6" height="27.6" viewBox="0 0 27.6 27.6"><g transform="translate(0.00 0.00)"><path d="M3.6 8.5 L23.1 8.5 L23.1 19.9 L3.6 19.9 M9.8 8.5 L9.8 19.9" fill="none" stroke="#fff" stroke-width="1.45" stroke-linecap="round" stroke-linejoin="round" stroke-linecap="butt" stroke-linejoin="miter"/><path d="M12.6 12.3 L16.5 16.3 L20.4 12.3" fill="none" stroke="#fff" stroke-width="1.45" stroke-linecap="round" stroke-linejoin="round" /></g></svg>
<span class="t" style="top:350px;line-height:21px;font-size:15px;color:#303030;left:450.1px;transform-origin:0 50%;transform:scaleX(0.8820);">P23200_YEAR</span>
<div class="a" style="left:683px;top:341.4px;width:260px;height:36.4px;background:#a8e8c9;border-radius:19px;"></div>
<span class="t" style="top:350px;line-height:21px;font-size:15px;color:#303030;left:699px;transform-origin:0 50%;transform:scaleX(0.9334);">Run_Report</span>
<div class="a" style="left:954px;top:340px;width:262px;height:41px;background:#0563bd;border-radius:3.5px;box-shadow:0 0 0 1px #e6f0fa, 0 0 3px 1px rgba(5,98,193,.35);"></div>
<div class="a" style="left:961.2px;top:347px;width:27.7px;height:27.7px;background:#c5d9ee;border-radius:2.5px;"></div>
<svg class="a" style="left:961.2px;top:347px;" width="27.7" height="27.7" viewBox="0 0 27.7 27.7"><g transform="translate(1.45 1.45)"><path d="M4.6 11.6 L8.0 4.8 L11.4 11.6 M5.8 9.4 L10.2 9.4" fill="none" stroke="#0b69c5" stroke-width="1.4" stroke-linecap="round" stroke-linejoin="round" /><path d="M14.6 6.4 L20.6 6.4 M14.6 11.3 L20.6 11.3 M4.6 16.4 L20.6 16.4 M4.6 21.2 L20.6 21.2" fill="none" stroke="#0b69c5" stroke-width="1.3" stroke-linecap="round" stroke-linejoin="round" /></g></svg>
<span class="t" style="top:350px;line-height:21px;font-size:15px;color:#fff;left:994px;transform-origin:0 50%;transform:scaleX(0.8704);">P23200_SPACER</span>
<div class="a" style="left:1227px;top:341.4px;width:260px;height:36.4px;background:#a8e8c9;border-radius:19px;"></div>
<span class="t" style="top:350px;line-height:21px;font-size:15px;color:#303030;left:1242.7px;transform-origin:0 50%;transform:scaleX(0.8385);">SET_PS_CURRENT_SELECTION</span>
<span class="t" style="top:401px;line-height:18px;font-size:12.5px;color:#666666;left:405.3px;transform-origin:0 50%;transform:scaleX(0.9055);">REGION CONTENT</span>
<span class="t" style="top:431px;line-height:18px;font-size:12.5px;color:#666666;left:405.3px;transform-origin:0 50%;transform:scaleX(0.8868);">SUB REGIONS</span>
<span class="t" style="top:463px;line-height:18px;font-size:12.5px;color:#666666;left:405.3px;transform-origin:0 50%;transform:scaleX(0.9162);">CHANGE</span>
<span class="t" style="top:463px;line-height:18px;font-size:12.5px;color:#666666;left:490.3px;transform-origin:0 50%;transform:scaleX(0.8822);">PREVIOUS</span>
<span class="t" style="top:463px;line-height:18px;font-size:12.5px;color:#666666;left:575.3px;transform-origin:0 50%;transform:scaleX(0.8997);">NEXT</span>
<div class="a" style="left:389px;top:513px;width:1120px;height:120px;background:#fff;border:1px solid #ccd6e0;border-radius:2px;box-sizing:border-box;"></div>
<div class="a" style="left:390px;top:514px;width:1118px;height:39px;background:#e7f2fc;"></div>
<div class="a" style="left:390px;top:553px;width:1118px;height:1px;background:#d4e2ef;"></div>
<div class="a" style="left:396.2px;top:520px;width:27.7px;height:27.7px;background:#a0ccf4;border-radius:2.5px;"></div>
<svg class="a" style="left:396.2px;top:520px;" width="27.7" height="27.7" viewBox="0 0 27.7 27.7"><g transform="translate(0.71 0.71)"><path d="M8.056 7.632000000000001 L2.968 12.932 L8.056 18.232" fill="none" stroke="#fff" stroke-width="1.6430000000000002" stroke-linecap="round" stroke-linejoin="round" /><path d="M18.232 7.632000000000001 L23.32 12.932 L18.232 18.232" fill="none" stroke="#fff" stroke-width="1.6430000000000002" stroke-linecap="round" stroke-linejoin="round" /><path d="M16.112 5.088 L10.812 20.988000000000003" fill="none" stroke="#fff" stroke-width="1.6430000000000002" stroke-linecap="round" stroke-linejoin="round" /></g></svg>
<span class="t" style="top:524px;line-height:22px;font-size:16px;color:#262626;left:430.3px;transform-origin:0 50%;transform:scaleX(0.9063);">Standard Grades Report</span>
<span class="t" style="top:568px;line-height:18px;font-size:12.5px;color:#666666;left:405.3px;transform-origin:0 50%;transform:scaleX(0.8900);">ITEMS</span>
<span class="t" style="top:600px;line-height:18px;font-size:12.5px;color:#666666;left:405.3px;transform-origin:0 50%;transform:scaleX(0.9055);">REGION CONTENT</span>
<div class="a" style="left:1532px;top:207px;width:10px;height:406px;background:#d0d0d0;"></div>
<div class="a" style="left:1532px;top:256px;width:10px;height:168px;background:#a0a0a0;"></div>
<div class="a" style="left:367px;top:613px;width:1175px;height:10px;background:#e0e0e0;"></div>
<svg class="a" style="left:947px;top:614.5px" width="12" height="7" viewBox="0 0 12 7"><path d="M0.6 0.8 L11.4 0.8 L6 6.2 Z" fill="#303030"/></svg>
<div class="a" style="left:367px;top:623px;width:1175px;height:250px;background:#fff;"></div>
<div class="a" style="left:377px;top:633px;width:82px;height:30px;background:#cfe5fa;border:1px solid #8db9e6;border-radius:3px;box-sizing:border-box;"></div>
<span class="t" style="top:639px;line-height:21px;font-size:15px;color:#303030;left:418px;transform-origin:0 50%;transform:scaleX(0.9446) translateX(-50%);">Regions</span>
<div class="a" style="left:469px;top:633px;width:66px;height:30px;background:#f8f8f8;border:1px solid #d2d2d2;border-radius:3px;box-sizing:border-box;"></div>
<span class="t" style="top:639px;line-height:21px;font-size:15px;color:#303030;left:502px;transform-origin:0 50%;transform:scaleX(0.9813) translateX(-50%);">Items</span>
<div class="a" style="left:545px;top:633px;width:81px;height:30px;background:#f8f8f8;border:1px solid #d2d2d2;border-radius:3px;box-sizing:border-box;"></div>
<span class="t" style="top:639px;line-height:21px;font-size:15px;color:#303030;left:585.5px;transform-origin:0 50%;transform:scaleX(0.9926) translateX(-50%);">Buttons</span>
<svg class="a" style="left:1489px;top:642px;" width="15" height="14" viewBox="0 0 15 14"><path d="M0 1.1 L14.7 1.1 M0 5 L14.7 5 M0 8.8 L14.7 8.8 M0 12.6 L14.7 12.6" fill="none" stroke="#404040" stroke-width="1.1" stroke-linecap="round" stroke-linejoin="round" stroke-linecap="butt"/></svg>
<svg class="a" style="left:1511px;top:645px;" width="11.4" height="6.6" viewBox="0 0 11.4 6.6"><path d="M0.75 0.75 L5.7 5.85 L10.65 0.75" fill="none" stroke="#404040" stroke-width="1.4" stroke-linecap="round" stroke-linejoin="round" /></svg>
<div class="a" style="left:367px;top:674px;width:1165px;height:1px;background:#ececec;"></div>
<svg class="a" style="left:414.5px;top:694.8px;" width="44" height="40" viewBox="0 0 44 40"><path d="M3.6 13 L33 13 L40 20.2 L33 27.4 L3.6 27.4 Q2.6 27.4 2.6 26.4 L2.6 14 Q2.6 13 3.6 13 Z M11.4 13 L18.4 20.2 L11.4 27.4 M22.2 13 L29.2 20.2 L22.2 27.4" fill="none" stroke="#86c1f2" stroke-width="1.25" stroke-linecap="round" stroke-linejoin="round" /></svg>
<span class="t" style="top:734px;line-height:20px;font-size:14px;color:#5a5a5a;left:436.5px;transform-origin:0 50%;transform:scaleX(0.9598) translateX(-50%);">Breadcrumb</span>
<svg class="a" style="left:539.5px;top:694.8px;" width="44" height="40" viewBox="0 0 44 40"><rect x="7.6" y="6.6" width="28.8" height="29.4" rx="2.2" fill="none" stroke="#86c1f2" stroke-width="1.25"/><path d="M7.6 13.6 L36.4 13.6" fill="none" stroke="#86c1f2" stroke-width="1.25" stroke-linecap="round" stroke-linejoin="round" /><path d="M15 3.6 L15 8.6 M29 3.6 L29 8.6 M15 6.2 L29 6.2" fill="none" stroke="#86c1f2" stroke-width="1.0" stroke-linecap="round" stroke-linejoin="round" /><rect x="21.0" y="18.4" width="2.7" height="2.7" fill="#86c1f2"/><rect x="25.4" y="18.4" width="2.7" height="2.7" fill="#86c1f2"/><rect x="29.8" y="18.4" width="2.7" height="2.7" fill="#86c1f2"/><rect x="12.2" y="23.099999999999998" width="2.7" height="2.7" fill="#86c1f2"/><rect x="16.6" y="23.099999999999998" width="2.7" height="2.7" fill="#86c1f2"/><rect x="21.0" y="23.099999999999998" width="2.7" height="2.7" fill="#86c1f2"/><rect x="25.4" y="23.099999999999998" width="2.7" height="2.7" fill="#86c1f2"/><rect x="29.8" y="23.099999999999998" width="2.7" height="2.7" fill="#86c1f2"/><rect x="12.2" y="27.799999999999997" width="2.7" height="2.7" fill="#86c1f2"/><rect x="16.6" y="27.799999999999997" width="2.7" height="2.7" fill="#86c1f2"/><rect x="21.0" y="27.799999999999997" width="2.7" height="2.7" fill="#86c1f2"/></svg>
<span class="t" style="top:734px;line-height:20px;font-size:14px;color:#5a5a5a;left:561.5px;transform-origin:0 50%;transform:scaleX(0.9414) translateX(-50%);">Calendar</span>
<svg class="a" style="left:664.5px;top:694.8px;" width="44" height="40" viewBox="0 0 44 40"><path d="M2.6 4.6 L2.6 33.8 L42 33.8" fill="none" stroke="#86c1f2" stroke-width="1.25" stroke-linecap="round" stroke-linejoin="round" /><rect x="6.4" y="22.2" width="6" height="11.6" rx="0" fill="none" stroke="#86c1f2" stroke-width="1.25"/><rect x="15.4" y="12.4" width="6" height="21.4" rx="0" fill="none" stroke="#86c1f2" stroke-width="1.25"/><rect x="24" y="7.2" width="6" height="26.6" rx="0" fill="none" stroke="#86c1f2" stroke-width="1.25"/><rect x="33" y="17.4" width="5.6" height="16.4" rx="0" fill="none" stroke="#86c1f2" stroke-width="1.25"/></svg>
<span class="t" style="top:734px;line-height:20px;font-size:14px;color:#5a5a5a;left:686.5px;transform-origin:0 50%;transform:scaleX(0.9523) translateX(-50%);">Chart</span>
<svg class="a" style="left:789.5px;top:694.8px;" width="44" height="40" viewBox="0 0 44 40"><rect x="4.4" y="6.4" width="35.2" height="26.6" rx="2" fill="none" stroke="#86c1f2" stroke-width="1.25"/><path d="M4.4 15.4 L39.6 15.4 M4.4 24.2 L39.6 24.2 M22 6.4 L22 33" fill="none" stroke="#86c1f2" stroke-width="1.25" stroke-linecap="round" stroke-linejoin="round" /></svg>
<span class="t" style="top:734px;line-height:20px;font-size:14px;color:#5a5a5a;left:811.5px;transform-origin:0 50%;transform:scaleX(0.9250) translateX(-50%);">Classic Report</span>
<svg class="a" style="left:914.5px;top:694.8px;" width="44" height="40" viewBox="0 0 44 40"><rect x="16.2" y="5" width="11.6" height="30.2" rx="2" fill="none" stroke="#86c1f2" stroke-width="1.25"/><path d="M16.2 15 L27.8 15 M16.2 25.2 L27.8 25.2" fill="none" stroke="#86c1f2" stroke-width="1.25" stroke-linecap="round" stroke-linejoin="round" /><path d="M9.4 15.6 L4.8 20.2 L9.4 24.8 M34.6 15.6 L39.2 20.2 L34.6 24.8" fill="none" stroke="#86c1f2" stroke-width="1.25" stroke-linecap="round" stroke-linejoin="round" /></svg>
<span class="t" style="top:734px;line-height:20px;font-size:14px;color:#5a5a5a;left:936.5px;transform-origin:0 50%;transform:scaleX(0.9813) translateX(-50%);">Column Toggle</span>
<span class="t" style="top:751px;line-height:20px;font-size:14px;color:#5a5a5a;left:936.5px;transform-origin:0 50%;transform:scaleX(0.9445) translateX(-50%);">Report</span>
<svg class="a" style="left:1039.5px;top:694.8px;" width="44" height="40" viewBox="0 0 44 40"><rect x="7.2" y="5.2" width="29.6" height="29.2" rx="2" fill="none" stroke="#86c1f2" stroke-width="1.25"/><path d="M7.2 12 L36.8 12" fill="none" stroke="#86c1f2" stroke-width="1.25" stroke-linecap="round" stroke-linejoin="round" /></svg>
<span class="t" style="top:734px;line-height:20px;font-size:14px;color:#5a5a5a;left:1061.5px;transform-origin:0 50%;transform:scaleX(0.9206) translateX(-50%);">Faceted Search</span>
<svg class="a" style="left:1164.5px;top:694.8px;" width="44" height="40" viewBox="0 0 44 40"><rect x="4.6" y="6.4" width="34.6" height="5.8" rx="2.4" fill="none" stroke="#86c1f2" stroke-width="1.25"/><rect x="4.6" y="16" width="34.6" height="5.8" rx="2.4" fill="none" stroke="#86c1f2" stroke-width="1.25"/><rect x="22.6" y="26.4" width="6" height="3.6" rx="0.6" fill="none" stroke="#86c1f2" stroke-width="1.25"/><rect x="32.6" y="26.4" width="6.4" height="3.6" rx="0.6" fill="#86c1f2" stroke="#86c1f2" stroke-width="1.25"/></svg>
<span class="t" style="top:734px;line-height:20px;font-size:14px;color:#5a5a5a;left:1186.5px;transform-origin:0 50%;transform:scaleX(0.9366) translateX(-50%);">Form</span>
<svg class="a" style="left:1289.5px;top:694.8px;" width="44" height="40" viewBox="0 0 44 40"><circle cx="22.05" cy="19.6" r="16.9" fill="none" stroke="#86c1f2" stroke-width="1.25"/><path d="M17.9 15.4 C18 10.6 27.2 10.4 27 15.6 C26.8 19.4 22.4 19.4 22.4 24.4" fill="none" stroke="#86c1f2" stroke-width="1.3" stroke-linecap="round" stroke-linejoin="round" /><circle cx="22.4" cy="28.2" r="1.15" fill="#86c1f2"/></svg>
<span class="t" style="top:734px;line-height:20px;font-size:14px;color:#5a5a5a;left:1311.5px;transform-origin:0 50%;transform:scaleX(0.9534) translateX(-50%);">Help Text</span>
<svg class="a" style="left:1414.5px;top:694.8px;" width="44" height="40" viewBox="0 0 44 40"><path d="M4.6 7.6 L38.8 7.6 L38.8 19.2 M4.6 7.6 L4.6 30.4 L21.8 30.4 M4.6 15.4 L38.8 15.4 M4.6 23 L21.8 23 M13.8 7.6 L13.8 30.4 M26 7.6 L26 19.2" fill="none" stroke="#86c1f2" stroke-width="1.25" stroke-linecap="round" stroke-linejoin="round" /><path d="M27.8 22.4 Q30.8 22.6 31.2 24 Q31.6 22.6 34.6 22.4 M27.8 35.2 Q30.8 35 31.2 33.6 Q31.6 35 34.6 35.2 M31.2 24 L31.2 33.6 M29.2 28.8 L33.2 28.8" fill="none" stroke="#86c1f2" stroke-width="1.15" stroke-linecap="round" stroke-linejoin="round" /></svg>
<span class="t" style="top:734px;line-height:20px;font-size:14px;color:#5a5a5a;left:1436.5px;transform-origin:0 50%;transform:scaleX(0.9638) translateX(-50%);">Interactive Grid</span>
<svg class="a" style="left:414.5px;top:811.2px;" width="44" height="40" viewBox="0 0 44 40"><path d="M24.4 12.4 L5.4 12.4 Q3.6 12.4 3.6 14.2 L3.6 33.2 Q3.6 35 5.4 35 L29.6 35 Q31.4 35 31.4 33.2 L31.4 26.4 M3.6 20 L25.6 20 M3.6 27.6 L31.4 27.6 M17.4 12.4 L17.4 35" fill="none" stroke="#86c1f2" stroke-width="1.25" stroke-linecap="round" stroke-linejoin="round" /><path d="M29.4 5.6 L29.8 21.8 L33.6 18 L37 25 L39.4 23.8 L36.2 17 L41.4 16.6 Z" fill="#86c1f2"/></svg>
<span class="t" style="top:851px;line-height:20px;font-size:14px;color:#5a5a5a;left:436.5px;transform-origin:0 50%;transform:scaleX(0.9647) translateX(-50%);">Interactive Report</span>
<svg class="a" style="left:539.5px;top:811.2px;" width="44" height="40" viewBox="0 0 44 40"><circle cx="6.4" cy="9.6" r="1.9" fill="#86c1f2"/><path d="M15 9.6 L39.6 9.6" fill="none" stroke="#86c1f2" stroke-width="1.25" stroke-linecap="round" stroke-linejoin="round" /><circle cx="6.4" cy="19.6" r="1.9" fill="#86c1f2"/><path d="M15 19.6 L39.6 19.6" fill="none" stroke="#86c1f2" stroke-width="1.25" stroke-linecap="round" stroke-linejoin="round" /><circle cx="6.4" cy="29.6" r="1.9" fill="#86c1f2"/><path d="M15 29.6 L39.6 29.6" fill="none" stroke="#86c1f2" stroke-width="1.25" stroke-linecap="round" stroke-linejoin="round" /></svg>
<span class="t" style="top:851px;line-height:20px;font-size:14px;color:#5a5a5a;left:561.5px;transform-origin:0 50%;transform:scaleX(0.8992) translateX(-50%);">List</span>
<svg class="a" style="left:664.5px;top:811.2px;" width="44" height="40" viewBox="0 0 44 40"><path d="M5.6 7.6 L21 7.6 M5.6 20.2 L36.4 20.2 M5.6 32.8 L21 32.8" fill="none" stroke="#86c1f2" stroke-width="1.25" stroke-linecap="round" stroke-linejoin="round" /><path d="M31.6 3.4 L36.2 7.6 L31.6 11.8 M31.6 28.6 L36.2 32.8 L31.6 37" fill="none" stroke="#86c1f2" stroke-width="1.25" stroke-linecap="round" stroke-linejoin="round" /></svg>
<span class="t" style="top:851px;line-height:20px;font-size:14px;color:#5a5a5a;left:686.5px;transform-origin:0 50%;transform:scaleX(0.9358) translateX(-50%);">List View</span>
<svg class="a" style="left:789.5px;top:811.2px;" width="44" height="40" viewBox="0 0 44 40"><path d="M22 33.6 C18 26 12.6 20.4 12.6 13.6 C12.6 7.8 16.8 3.8 22 3.8 C27.2 3.8 31.4 7.8 31.4 13.6 C31.4 20.4 26 26 22 33.6 Z" fill="none" stroke="#86c1f2" stroke-width="1.25" stroke-linecap="round" stroke-linejoin="round" /><circle cx="22" cy="13.2" r="3.8" fill="none" stroke="#86c1f2" stroke-width="1.15"/><path d="M15.8 28.6 L11.6 28.6 L4.6 38 L39.4 38 L32.4 28.6 L28.2 28.6" fill="none" stroke="#86c1f2" stroke-width="1.25" stroke-linecap="round" stroke-linejoin="round" /></svg>
<span class="t" style="top:851px;line-height:20px;font-size:14px;color:#5a5a5a;left:811.5px;transform-origin:0 50%;transform:scaleX(0.9685) translateX(-50%);">Map Chart</span>
<svg class="a" style="left:914.5px;top:811.2px;" width="44" height="40" viewBox="0 0 44 40"><path d="M9.2 3.4 L9.2 32 Q9.2 36 13.2 36 L20 36 M4.6 8 L9.2 3.2 L13.8 8" fill="none" stroke="#86c1f2" stroke-width="1.25" stroke-linecap="round" stroke-linejoin="round" /><path d="M34.4 38.2 L34.4 10 Q34.4 6 30.4 6 L22.6 6 M29.8 33.6 L34.4 38.4 L39 33.6" fill="none" stroke="#86c1f2" stroke-width="1.25" stroke-linecap="round" stroke-linejoin="round" /><path d="M15.2 14.6 L28.4 14.6 M15.2 20.4 L28.4 20.4 M15.2 26.2 L28.4 26.2" fill="none" stroke="#86c1f2" stroke-width="1.25" stroke-linecap="round" stroke-linejoin="round" /></svg>
<span class="t" style="top:851px;line-height:20px;font-size:14px;color:#5a5a5a;left:936.5px;transform-origin:0 50%;transform:scaleX(0.9405) translateX(-50%);">PL/SQL Dynamic</span>
<svg class="a" style="left:1039.5px;top:811.2px;" width="44" height="40" viewBox="0 0 44 40"><path d="M33 3.4 L16.6 3.4 Q12.6 3.4 12.6 7.4 L12.6 38 M7.8 33.4 L12.6 38.2 L17.4 33.4" fill="none" stroke="#86c1f2" stroke-width="1.25" stroke-linecap="round" stroke-linejoin="round" /><path d="M20.6 11.4 L33 11.4 M20.6 18 L33 18 M20.6 24.6 L33 24.6" fill="none" stroke="#86c1f2" stroke-width="1.25" stroke-linecap="round" stroke-linejoin="round" /></svg>
<span class="t" style="top:851px;line-height:20px;font-size:14px;color:#5a5a5a;left:1061.5px;transform-origin:0 50%;transform:scaleX(0.9504) translateX(-50%);">Reflow Report</span>
<svg class="a" style="left:1164.5px;top:811.2px;" width="44" height="40" viewBox="0 0 44 40"><rect x="4.6" y="12.8" width="34.6" height="21.6" rx="2" fill="none" stroke="#86c1f2" stroke-width="1.25"/><rect x="5.4" y="5.4" width="7" height="3.6" rx="0.6" fill="#86c1f2" stroke="#86c1f2" stroke-width="1.25"/><rect x="16" y="5.4" width="6.6" height="3.6" rx="0.6" fill="none" stroke="#86c1f2" stroke-width="1.25"/><rect x="26.4" y="5.4" width="6.6" height="3.6" rx="0.6" fill="none" stroke="#86c1f2" stroke-width="1.25"/></svg>
<span class="t" style="top:851px;line-height:20px;font-size:14px;color:#5a5a5a;left:1186.5px;transform-origin:0 50%;transform:scaleX(0.9515) translateX(-50%);">Region Display</span>
<svg class="a" style="left:1289.5px;top:811.2px;" width="44" height="40" viewBox="0 0 44 40"><path d="M13.4 11 L4.6 20.2 L13.4 29.4 M30.6 11 L39.4 20.2 L30.6 29.4 M27.4 4.6 L17 35.6" fill="none" stroke="#86c1f2" stroke-width="1.3" stroke-linecap="round" stroke-linejoin="round" /></svg>
<span class="t" style="top:851px;line-height:20px;font-size:14px;color:#5a5a5a;left:1311.5px;transform-origin:0 50%;transform:scaleX(0.9666) translateX(-50%);">Static Content</span>
<svg class="a" style="left:1414.5px;top:811.2px;" width="44" height="40" viewBox="0 0 44 40"><path d="M5.4 3.4 L12.6 3.4 L15 6.2 L25.4 6.2 Q26.6 6.2 26.6 7.4 L26.6 20 Q26.6 21.2 25.4 21.2 L5.4 21.2 Q4.2 21.2 4.2 20 L4.2 4.6 Q4.2 3.4 5.4 3.4 Z" fill="none" stroke="#86c1f2" stroke-width="1.25" stroke-linecap="round" stroke-linejoin="round" /><path d="M13.6 21.2 L13.6 37.6 L39.4 37.6 M13.6 29.6 L39.4 29.6" fill="none" stroke="#86c1f2" stroke-width="1.25" stroke-linecap="round" stroke-linejoin="round" /></svg>
<span class="t" style="top:851px;line-height:20px;font-size:14px;color:#5a5a5a;left:1436.5px;transform-origin:0 50%;transform:scaleX(0.8910) translateX(-50%);">Tree</span>
<div class="a" style="left:1532px;top:675px;width:10px;height:198px;background:#fff;"></div>
<div class="a" style="left:1532px;top:675px;width:10px;height:106px;background:#a0a0a0;"></div>
<div class="a" style="left:1552px;top:106px;width:362px;height:44px;background:#f4f4f4;"></div>
<div class="a" style="left:1552px;top:150px;width:362px;height:1px;background:#dcdcdc;"></div>
<div class="a" style="left:1552px;top:106px;width:180px;height:45px;background:#fff;"></div>
<div class="a" style="left:1732px;top:106px;width:1px;height:44px;background:#dcdcdc;"></div>
<span class="t" style="top:120px;line-height:21px;font-size:15px;color:#262626;left:1609.1px;transform-origin:0 50%;transform:scaleX(0.9506);">Page Item</span>
<div class="a" style="left:1552px;top:151px;width:362px;height:55px;background:#fff;"></div>
<div class="a" style="left:1552px;top:206px;width:362px;height:1px;background:#e0e0e0;"></div>
<svg class="a" style="left:1571px;top:168px;" width="22" height="22" viewBox="0 0 22 22"><path d="M15 8.6 A6.7 6.7 0 1 1 1.6 8.6 A6.7 6.7 0 1 1 15 8.6 Z M13.2 13.4 L19.4 19.6" fill="none" stroke="#707070" stroke-width="1.3" stroke-linecap="round" stroke-linejoin="round" /></svg>
<span class="t" style="top:170px;line-height:21px;font-size:15px;color:#757575;left:1602px;transform-origin:0 50%;transform:scaleX(0.9597);">Filter</span>
<svg class="a" style="left:1854px;top:170px;" width="20" height="18" viewBox="0 0 20 18"><path d="M1.6 2 C2 8.4 6 11.6 17 11.6 M12.6 7 L17.6 11.6 L12.6 16.2" fill="none" stroke="#303030" stroke-width="1.3" stroke-linecap="round" stroke-linejoin="round" /></svg>
<svg class="a" style="left:1878.4px;top:176px;" width="11.4" height="6.6" viewBox="0 0 11.4 6.6"><path d="M0.75 0.75 L5.7 5.85 L10.65 0.75" fill="none" stroke="#404040" stroke-width="1.4" stroke-linecap="round" stroke-linejoin="round" /></svg>
<div class="a" style="left:1552px;top:207px;width:352px;height:666px;background:#fff;"></div>
<div class="a" style="left:1552px;top:209px;width:352px;height:18.6px;background:#efefef;"></div>
<div class="a" style="left:1552px;top:323px;width:352px;height:18.6px;background:#efefef;"></div>
<div class="a" style="left:1552px;top:537px;width:352px;height:17.6px;background:#efefef;"></div>
<div class="a" style="left:1562.2px;top:240.4px;width:19.5px;height:19.4px;background:#d6d6d6;border-radius:2.5px;"></div>
<svg class="a" style="left:1566.2px;top:247.2px;" width="11.4" height="6.6" viewBox="0 0 11.4 6.6"><path d="M0.75 0.75 L5.7 5.85 L10.65 0.75" fill="none" stroke="#fff" stroke-width="1.5" stroke-linecap="round" stroke-linejoin="round" /></svg>
<span class="t" style="top:239px;line-height:26px;font-size:18.75px;color:#1f1f1f;font-weight:700;left:1589.2px;transform-origin:0 50%;transform:scaleX(0.8452);">Label</span>
<span class="t" style="top:289px;line-height:21px;font-size:15px;color:#161616;left:1562px;transform-origin:0 50%;transform:scaleX(0.9318);">Label</span>
<span class="t" style="top:289px;line-height:21px;font-size:15px;color:#303030;left:1707.2px;transform-origin:0 50%;transform:scaleX(0.9341);">Spacer</span>
<div class="a" style="left:1707.2px;top:312px;width:181.8px;height:1px;background:#dadada;"></div>
<div class="a" style="left:1562.2px;top:354.2px;width:19.5px;height:19.4px;background:#d6d6d6;border-radius:2.5px;"></div>
<svg class="a" style="left:1566.2px;top:361px;" width="11.4" height="6.6" viewBox="0 0 11.4 6.6"><path d="M0.75 0.75 L5.7 5.85 L10.65 0.75" fill="none" stroke="#fff" stroke-width="1.5" stroke-linecap="round" stroke-linejoin="round" /></svg>
<span class="t" style="top:353px;line-height:26px;font-size:18.75px;color:#1f1f1f;font-weight:700;left:1589.2px;transform-origin:0 50%;transform:scaleX(0.8625);">Settings</span>
<span class="t" style="top:403px;line-height:21px;font-size:15px;color:#161616;left:1562px;transform-origin:0 50%;transform:scaleX(0.9408);">Send On Page</span>
<span class="t" style="top:423px;line-height:21px;font-size:15px;color:#161616;left:1562px;transform-origin:0 50%;transform:scaleX(0.9853);">Submit</span>
<div class="a" style="left:1702px;top:407px;width:55px;height:30px;background:#0572ce;border-radius:15px;"></div>
<div class="a" style="left:1729px;top:409.3px;width:25.4px;height:25.4px;background:#fff;border-radius:13px;"></div>
<span class="t" style="top:463px;line-height:21px;font-size:15px;color:#161616;left:1562px;transform-origin:0 50%;transform:scaleX(0.9338);">Based On</span>
<span class="t" style="top:463px;line-height:21px;font-size:15px;color:#161616;left:1707.2px;transform-origin:0 50%;transform:scaleX(0.9654);">Page Item Value</span>
<svg class="a" style="left:1868.1px;top:469.6px;" width="11.4" height="6.6" viewBox="0 0 11.4 6.6"><path d="M0.75 0.75 L5.7 5.85 L10.65 0.75" fill="none" stroke="#404040" stroke-width="1.3" stroke-linecap="round" stroke-linejoin="round" /></svg>
<div class="a" style="left:1707.2px;top:486px;width:181.8px;height:1px;background:#dadada;"></div>
<span class="t" style="top:503px;line-height:21px;font-size:15px;color:#161616;left:1562px;transform-origin:0 50%;transform:scaleX(0.9371);">Show Line Breaks</span>
<div class="a" style="left:1702px;top:497px;width:55px;height:30px;background:#8c8c8c;border-radius:15px;"></div>
<div class="a" style="left:1704px;top:499.3px;width:25.4px;height:25.4px;background:#fff;border-radius:13px;"></div>
<div class="a" style="left:1562.2px;top:568.8px;width:19.5px;height:19.4px;background:#d6d6d6;border-radius:2.5px;"></div>
<svg class="a" style="left:1566.2px;top:575.6px;" width="11.4" height="6.6" viewBox="0 0 11.4 6.6"><path d="M0.75 0.75 L5.7 5.85 L10.65 0.75" fill="none" stroke="#fff" stroke-width="1.5" stroke-linecap="round" stroke-linejoin="round" /></svg>
<span class="t" style="top:566px;line-height:26px;font-size:18.75px;color:#1f1f1f;font-weight:700;left:1589.2px;transform-origin:0 50%;transform:scaleX(0.8622);">Layout</span>
<span class="t" style="top:616px;line-height:21px;font-size:15px;color:#161616;left:1562px;transform-origin:0 50%;transform:scaleX(0.9399);">Sequence</span>
<span class="t" style="top:616px;line-height:21px;font-size:15px;color:#303030;left:1707.2px;transform-origin:0 50%;transform:scaleX(0.9109);">40</span>
<div class="a" style="left:1707.2px;top:639px;width:181.8px;height:1px;background:#dadada;"></div>
<span class="t" style="top:656px;line-height:21px;font-size:15px;color:#161616;left:1562px;transform-origin:0 50%;transform:scaleX(0.9527);">Region</span>
<div class="a" style="left:1707.2px;top:650px;width:100px;height:30px;overflow:hidden">
<span class="t" style="top:6px;line-height:21px;font-size:15px;color:#161616;left:0px;transform-origin:0 50%;transform:scaleX(0.9505);">Standard Grades</span></div>
<svg class="a" style="left:1818.3px;top:662.8px;" width="11.4" height="6.6" viewBox="0 0 11.4 6.6"><path d="M0.75 0.75 L5.7 5.85 L10.65 0.75" fill="none" stroke="#404040" stroke-width="1.3" stroke-linecap="round" stroke-linejoin="round" /></svg>
<div class="a" style="left:1707.2px;top:679px;width:131.8px;height:1px;background:#dadada;"></div>
<div class="a" style="left:1854px;top:650px;width:39.5px;height:29.5px;background:#fff;border:1px solid #d2d2d2;border-radius:3px;box-sizing:border-box;"></div>
<svg class="a" style="left:1870px;top:658.4px;" width="7.8" height="13.4" viewBox="0 0 7.8 13.4"><path d="M0.75 0.75 L7.05 6.7 L0.75 12.65" fill="none" stroke="#404040" stroke-width="1.4" stroke-linecap="round" stroke-linejoin="round" /></svg>
<span class="t" style="top:696px;line-height:21px;font-size:15px;color:#161616;left:1562px;transform-origin:0 50%;transform:scaleX(0.9607);">Start New Row</span>
<div class="a" style="left:1702px;top:690px;width:55px;height:30px;background:#8c8c8c;border-radius:15px;"></div>
<div class="a" style="left:1704px;top:692.3px;width:25.4px;height:25.4px;background:#fff;border-radius:13px;"></div>
<span class="t" style="top:736px;line-height:21px;font-size:15px;color:#161616;left:1562px;transform-origin:0 50%;transform:scaleX(0.9790);">Column</span>
<span class="t" style="top:736px;line-height:21px;font-size:15px;color:#161616;left:1707.2px;transform-origin:0 50%;transform:scaleX(1.0209);">Automatic</span>
<svg class="a" style="left:1868.1px;top:742.6px;" width="11.4" height="6.6" viewBox="0 0 11.4 6.6"><path d="M0.75 0.75 L5.7 5.85 L10.65 0.75" fill="none" stroke="#404040" stroke-width="1.3" stroke-linecap="round" stroke-linejoin="round" /></svg>
<div class="a" style="left:1707.2px;top:758.5px;width:181.8px;height:1px;background:#dadada;"></div>
<span class="t" style="top:776px;line-height:21px;font-size:15px;color:#161616;left:1562px;transform-origin:0 50%;transform:scaleX(0.9898);">New Column</span>
<div class="a" style="left:1702px;top:770.2px;width:55px;height:30px;background:#0572ce;border-radius:15px;"></div>
<div class="a" style="left:1729px;top:772.5px;width:25.4px;height:25.4px;background:#fff;border-radius:13px;"></div>
<span class="t" style="top:816px;line-height:21px;font-size:15px;color:#161616;left:1562px;transform-origin:0 50%;transform:scaleX(0.9638);">Column Span</span>
<span class="t" style="top:816px;line-height:21px;font-size:15px;color:#161616;left:1707.2px;transform-origin:0 50%;transform:scaleX(0.9500);">3</span>
<svg class="a" style="left:1868.1px;top:822.4px;" width="11.4" height="6.6" viewBox="0 0 11.4 6.6"><path d="M0.75 0.75 L5.7 5.85 L10.65 0.75" fill="none" stroke="#404040" stroke-width="1.3" stroke-linecap="round" stroke-linejoin="round" /></svg>
<div class="a" style="left:1707.2px;top:839px;width:181.8px;height:1px;background:#dadada;"></div>
<span class="t" style="top:856px;line-height:21px;font-size:15px;color:#161616;left:1562px;transform-origin:0 50%;transform:scaleX(0.9638);">Label Column Span</span>
<span class="t" style="top:856px;line-height:21px;font-size:15px;color:#161616;left:1707.2px;transform-origin:0 50%;transform:scaleX(0.9500);">0</span>
<svg class="a" style="left:1868.1px;top:862.6px;" width="11.4" height="6.6" viewBox="0 0 11.4 6.6"><path d="M0.75 0.75 L5.7 5.85 L10.65 0.75" fill="none" stroke="#404040" stroke-width="1.3" stroke-linecap="round" stroke-linejoin="round" /></svg>
<div class="a" style="left:1904px;top:207px;width:10px;height:666px;background:#fff;"></div>
<div class="a" style="left:1904px;top:237px;width:10px;height:130.5px;background:#a0a0a0;"></div>
<div class="a" style="left:1538px;top:676px;width:155px;height:51px;border:5px solid #ed1c24;box-sizing:border-box;"></div>
</body></html>
